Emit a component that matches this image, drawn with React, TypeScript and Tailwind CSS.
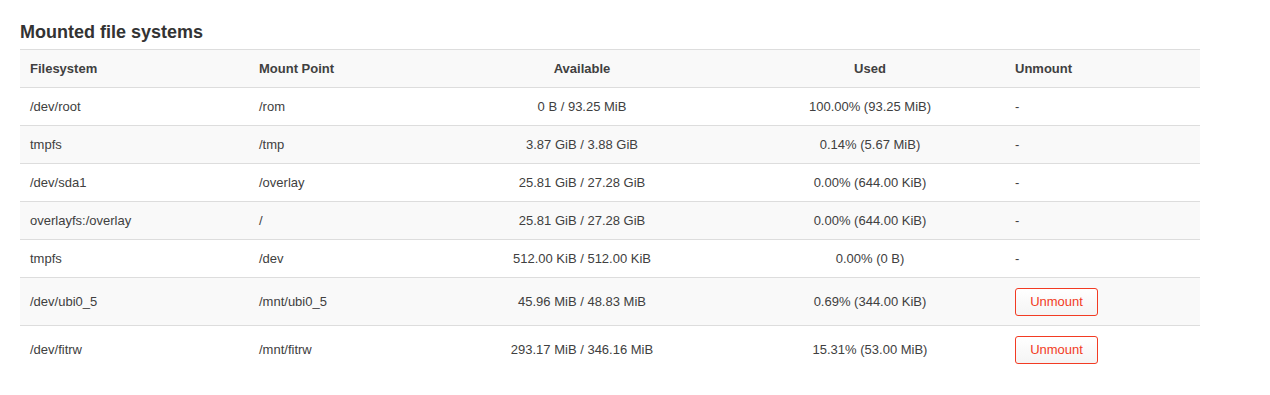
const rows = [
  { fs: '/dev/root', mp: '/rom', avail: '0 B / 93.25 MiB', used: '100.00% (93.25 MiB)', unmount: false },
  { fs: 'tmpfs', mp: '/tmp', avail: '3.87 GiB / 3.88 GiB', used: '0.14% (5.67 MiB)', unmount: false },
  { fs: '/dev/sda1', mp: '/overlay', avail: '25.81 GiB / 27.28 GiB', used: '0.00% (644.00 KiB)', unmount: false },
  { fs: 'overlayfs:/overlay', mp: '/', avail: '25.81 GiB / 27.28 GiB', used: '0.00% (644.00 KiB)', unmount: false },
  { fs: 'tmpfs', mp: '/dev', avail: '512.00 KiB / 512.00 KiB', used: '0.00% (0 B)', unmount: false },
  { fs: '/dev/ubi0_5', mp: '/mnt/ubi0_5', avail: '45.96 MiB / 48.83 MiB', used: '0.69% (344.00 KiB)', unmount: true },
  { fs: '/dev/fitrw', mp: '/mnt/fitrw', avail: '293.17 MiB / 346.16 MiB', used: '15.31% (53.00 MiB)', unmount: true }
];

const App = () => {
  return (
    <div className="min-h-[395px] bg-white px-5 pt-5 font-['Liberation_Sans',Arial,sans-serif] text-[13px] text-[#404040]">
      <h3 className="mb-[5px] text-[18px] leading-6 font-bold text-[#333]">
        {'Mounted file systems'}
      </h3>
      <table className="w-[1180px] table-fixed border-collapse">
        <colgroup>
          <col className="w-[229px]" />
          <col className="w-[180px]" />
          <col className="w-[306px]" />
          <col className="w-[270px]" />
          <col className="w-[195px]" />
        </colgroup>
        <thead>
          <tr className="h-[38px] border-t border-[#ddd] bg-[#f9f9f9] font-bold">
            <th className="px-[10px] text-left">{'Filesystem'}</th>
            <th className="px-[10px] text-left">{'Mount Point'}</th>
            <th className="px-[10px] text-center">{'Available'}</th>
            <th className="px-[10px] text-center">{'Used'}</th>
            <th className="px-[10px] text-left">{'Unmount'}</th>
          </tr>
        </thead>
        <tbody>
          {rows.map((r, i) => (
            <tr
              key={i}
              className={`border-t border-[#ddd] ${r.unmount ? 'h-[48px]' : 'h-[38px]'} ${i % 2 === 1 ? 'bg-[#f9f9f9]' : 'bg-white'}`}
            >
              <td className="px-[10px]">{r.fs}</td>
              <td className="px-[10px]">{r.mp}</td>
              <td className="px-[10px] text-center">{r.avail}</td>
              <td className="px-[10px] text-center">{r.used}</td>
              <td className="px-[10px]">
                {r.unmount ? (
                  <button
                    type="button"
                    className="h-[28px] w-[83px] rounded-[3px] border border-[#f23b23] bg-gradient-to-b from-white to-[#f4f4f4] text-[13px] text-[#f23b23]"
                  >
                    {'Unmount'}
                  </button>
                ) : (
                  '-'
                )}
              </td>
            </tr>
          ))}
        </tbody>
      </table>
    </div>
  );
};

export default App;
